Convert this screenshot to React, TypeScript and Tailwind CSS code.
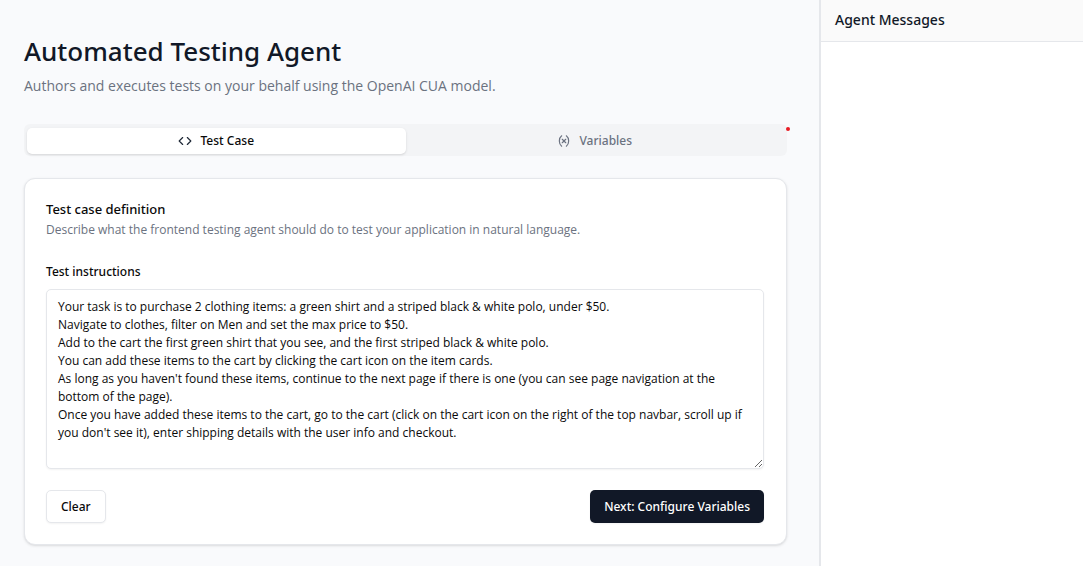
import { useState } from "react";
import { Code, Variable } from "lucide-react";

const INSTRUCTIONS = `Your task is to purchase 2 clothing items: a green shirt and a striped black & white polo, under $50.
Navigate to clothes, filter on Men and set the max price to $50.
Add to the cart the first green shirt that you see, and the first striped black & white polo.
You can add these items to the cart by clicking the cart icon on the item cards.
As long as you haven't found these items, continue to the next page if there is one (you can see page navigation at the bottom of the page).
Once you have added these items to the cart, go to the cart (click on the cart icon on the right of the top navbar, scroll up if you don't see it), enter shipping details with the user info and checkout.`;

function TabBar() {
  return (
    <div
      role="tablist"
      className="mt-7 flex h-8 items-center rounded-md bg-[#f3f4f6] px-[3px] pt-px font-['Noto_Sans',sans-serif] font-medium"
    >
      <button
        type="button"
        role="tab"
        aria-selected="true"
        className="flex h-[26px] flex-1 items-center justify-center gap-2 rounded-[5px] bg-white text-[#0a0a0a] shadow-sm"
      >
        <Code size={14} className="text-[#1f2937]" />
        Test Case
      </button>
      <button
        type="button"
        role="tab"
        aria-selected="false"
        className="relative flex h-[26px] flex-1 items-center justify-center gap-2 rounded-[5px] text-[#6b7280]"
      >
        <Variable size={14} />
        Variables
        <span className="absolute -top-px -right-[6px] size-1 rounded-full bg-[#e81b23]" />
      </button>
    </div>
  );
}

export default function App() {
  const [text, setText] = useState(INSTRUCTIONS);

  return (
    <div className="flex min-h-screen bg-[#f9fafc] font-['Open_Sans','Noto_Sans',sans-serif] text-[12px] leading-[18px] text-[#0a0a0a]">
      <main className="min-w-0 flex-1 pt-[31px] pr-8 pb-5 pl-6">
        <h1 className="font-['Noto_Sans',sans-serif] text-[26px] leading-10 font-medium text-[#111827]">
          Automated Testing Agent
        </h1>
        <p className="mt-[5px] text-[14px] leading-5 text-[#6b7280]">
          Authors and executes tests on your behalf using the OpenAI CUA model.
        </p>

        <TabBar />

        <section className="mt-[22px] rounded-[11px] border border-[#e5e7eb] bg-white pt-5 pr-[22px] pb-[21px] pl-[21px] shadow-sm">
          <h2 className="font-['Noto_Sans',sans-serif] text-[13px] leading-5 font-medium">
            Test case definition
          </h2>
          <p className="mt-0.5 text-[#6b7280]">
            Describe what the frontend testing agent should do to test your application in
            natural language.
          </p>

          <label
            htmlFor="instructions"
            className="mt-6 block font-['Noto_Sans',sans-serif] font-medium"
          >
            Test instructions
          </label>
          <textarea
            id="instructions"
            value={text}
            onChange={(e) => setText(e.target.value)}
            spellCheck={false}
            className="mt-2 block h-[180px] w-full resize-y rounded-[5px] border border-[#e5e7eb] bg-white px-[11px] py-2 shadow-xs"
          />

          <div className="mt-[21px] flex items-center justify-between font-['Noto_Sans',sans-serif] font-medium">
            <button
              type="button"
              onClick={() => setText("")}
              className="h-[33px] rounded-[5px] border border-[#e5e7eb] bg-white px-[14px] pt-px shadow-xs"
            >
              Clear
            </button>
            <button
              type="button"
              className="h-[33px] rounded-[5px] bg-[#111827] px-[14px] pt-px text-white shadow-xs"
            >
              Next: Configure Variables
            </button>
          </div>
        </section>
      </main>

      <aside className="w-[264px] shrink-0 border-l-2 border-[#e5e7eb] bg-white">
        <header className="border-b border-[#e5e7eb] bg-[#fafafa] px-[14px] pt-[10px] pb-[11px]">
          <h2 className="font-['Noto_Sans',sans-serif] text-[14px] leading-5 font-medium text-[#111827]">
            Agent Messages
          </h2>
        </header>
      </aside>
    </div>
  );
}
